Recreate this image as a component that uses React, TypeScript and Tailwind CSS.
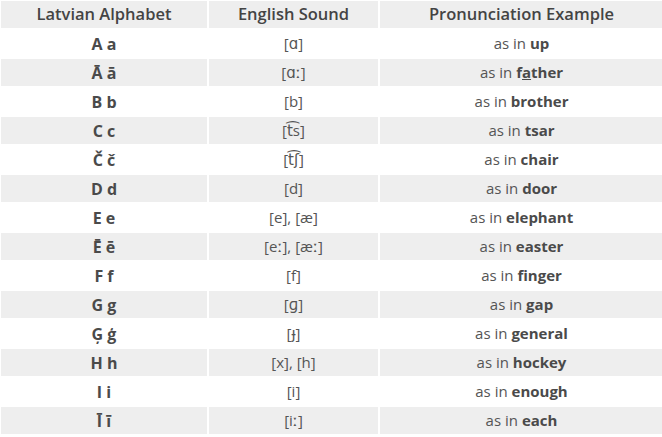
import React from 'react';

type Row = { letter: string; sound: string; word: React.ReactNode };

const rows: Row[] = [
  { letter: 'A a', sound: '[ɑ]', word: 'up' },
  { letter: 'Ā ā', sound: '[ɑː]', word: <>f<span className="underline">a</span>ther</> },
  { letter: 'B b', sound: '[b]', word: 'brother' },
  { letter: 'C c', sound: '[t͡s]', word: 'tsar' },
  { letter: 'Č č', sound: '[t͡ʃ]', word: 'chair' },
  { letter: 'D d', sound: '[d]', word: 'door' },
  { letter: 'E e', sound: '[e], [æ]', word: 'elephant' },
  { letter: 'Ē ē', sound: '[eː], [æː]', word: 'easter' },
  { letter: 'F f', sound: '[f]', word: 'finger' },
  { letter: 'G g', sound: '[ɡ]', word: 'gap' },
  { letter: 'Ģ ģ', sound: '[ɟ]', word: 'general' },
  { letter: 'H h', sound: '[x], [h]', word: 'hockey' },
  { letter: 'I i', sound: '[i]', word: 'enough' },
  { letter: 'Ī ī', sound: '[iː]', word: 'each' },
];

const cell = 'h-[27px] flex items-center justify-center';
const head = `${cell} bg-[#eeeeee] font-semibold text-[16.5px] text-[#444]`;

export default function App() {
  return (
    <div
      className="w-[662px] h-[437px] bg-white pt-px pl-px text-[15px] text-[#555]"
      style={{ fontFamily: '"Open Sans", "DejaVu Sans", sans-serif' }}
    >
      <div className="grid grid-cols-[206px_169px_283px] gap-[2px]">
        <div className={head}>Latvian Alphabet</div>
        <div className={head}>English Sound</div>
        <div className={head}>Pronunciation Example</div>
        {rows.map((r, i) => {
          const bg = i % 2 === 1 ? 'bg-[#eeeeee]' : 'bg-white';
          return (
            <React.Fragment key={r.letter}>
              <div className={`${cell} ${bg} font-bold text-[16px] text-[#4a4a4a]`}>{r.letter}</div>
              <div className={`${cell} ${bg}`}>{r.sound}</div>
              <div className={`${cell} ${bg}`}>
                <span>
                  as in <b className="font-bold text-[#4a4a4a]">{r.word}</b>
                </span>
              </div>
            </React.Fragment>
          );
        })}
      </div>
    </div>
  );
}
